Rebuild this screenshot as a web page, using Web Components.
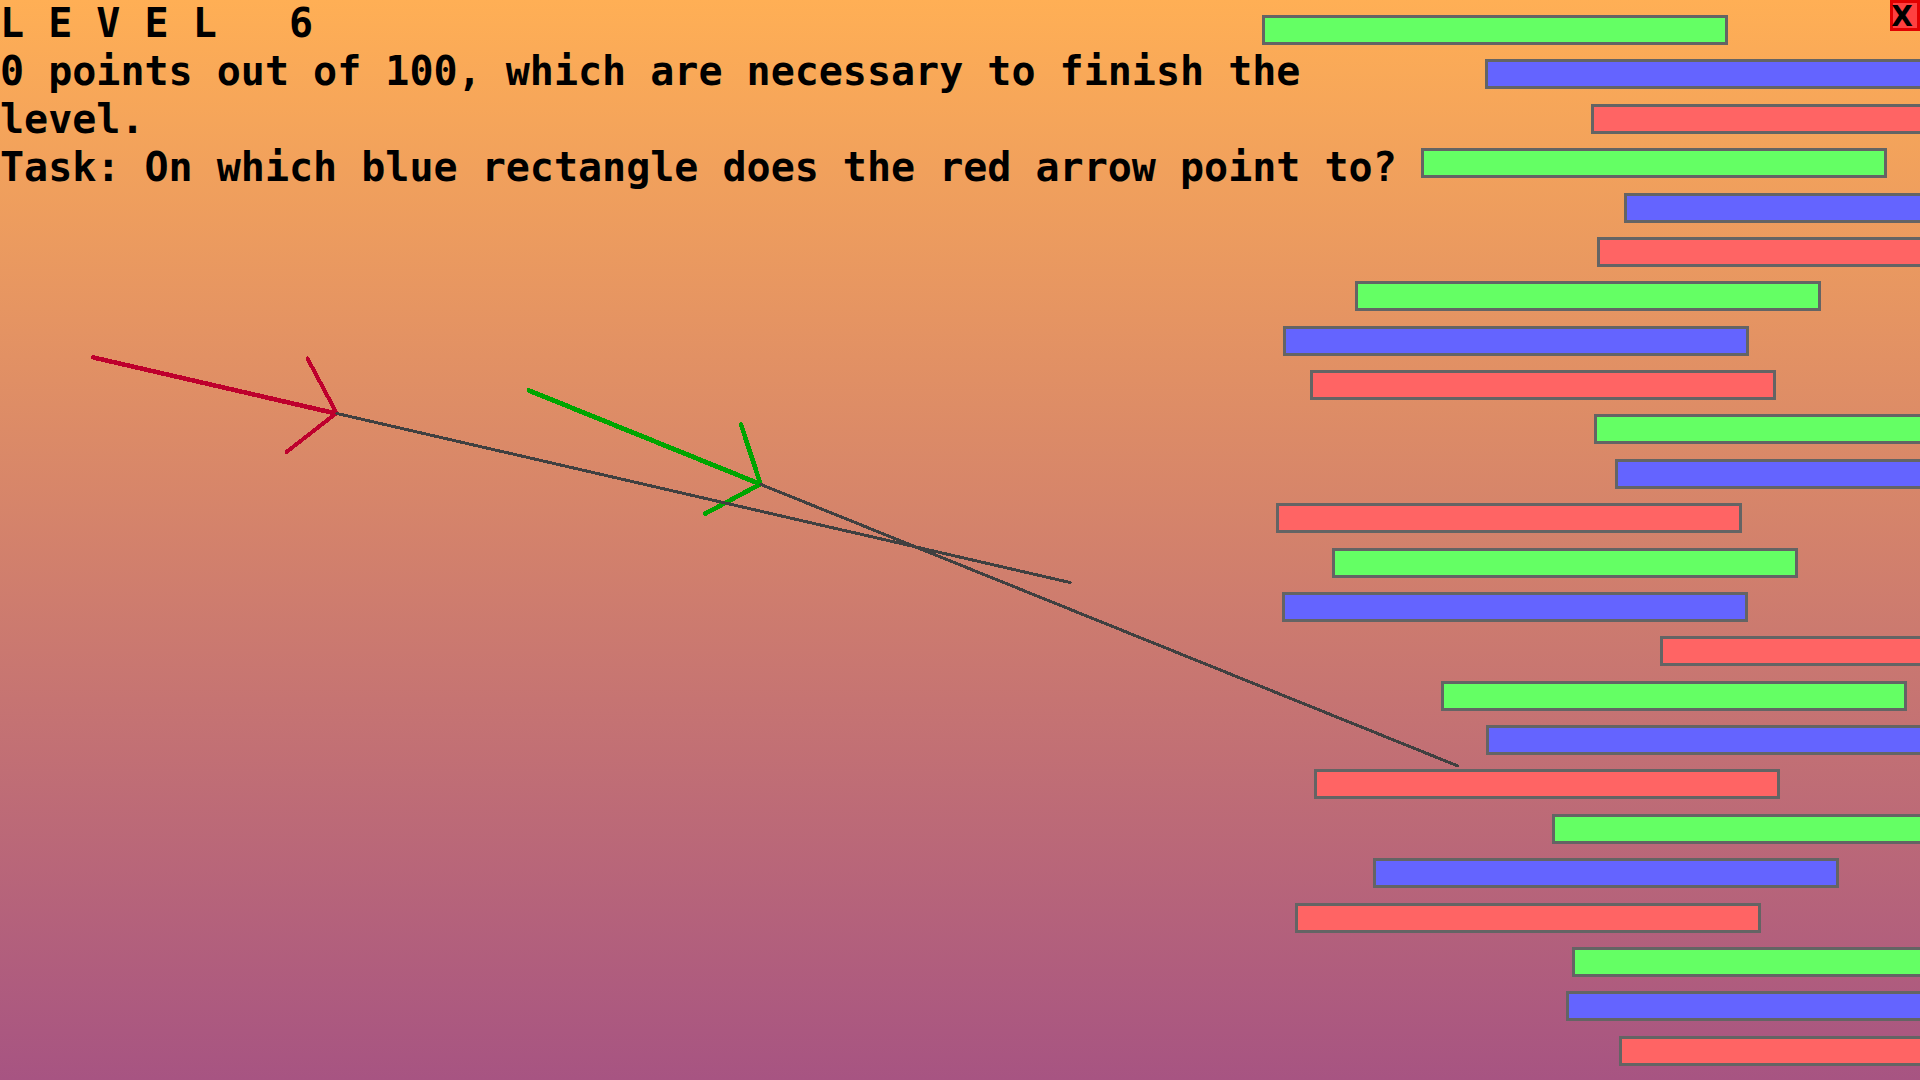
<!DOCTYPE html>
<html lang="en">
<head>
<meta charset="utf-8">
<title>Level 6</title>
<style>
html, body { margin: 0; height: 100%; }
body { font-family: "DejaVu Sans Mono", "Liberation Mono", monospace; font-weight: bold; font-size: 40px; line-height: 48px; color: #000; overflow: hidden; }
</style>
</head>
<body>
<game-screen></game-screen>
<script>
class GameScreen extends HTMLElement {
  constructor() {
    super();
    this.attachShadow({ mode: "open" }).innerHTML = `
      <style>
        :host { display: grid; grid-template: minmax(0, 1fr) / minmax(0, 1fr); height: 100vh; overflow: hidden;
                background: linear-gradient(#ffaf55, #a75482); }
        level-intro, target-field, arrow-layer { grid-area: 1 / 1; }
        level-intro { justify-self: start; align-self: start; max-width: 75%; }
        close-button { grid-area: 1 / 1; justify-self: end; align-self: start; }
      </style>
      <target-field></target-field>
      <arrow-layer></arrow-layer>
      <level-intro>
        <span slot="level">L E V E L &nbsp; 6</span>
        <span slot="score">0 points out of 100, which are necessary to finish the level.</span>
        <span slot="task">Task: On which blue rectangle does the red arrow point to?</span>
      </level-intro>
      <close-button></close-button>`;
  }
}

class LevelIntro extends HTMLElement {
  constructor() {
    super();
    this.attachShadow({ mode: "open" }).innerHTML = `
      <style>
        :host { display: block; margin-top: -1px; }
        h1, p { margin: 0; font: inherit; }
      </style>
      <h1><slot name="level"></slot></h1>
      <p><slot name="score"></slot></p>
      <p><slot name="task"></slot></p>`;
  }
}

class CloseButton extends HTMLElement {
  constructor() {
    super();
    this.attachShadow({ mode: "open" }).innerHTML = `
      <style>
        :host { display: block; }
        button { display: flex; width: 30px; height: 31px; margin: 0; padding: 2px 6px 0 0; border: 0;
                 box-sizing: border-box; align-items: center; justify-content: center;
                 background: #ff4040; box-shadow: inset 0 0 0 3px #e10000; color: #000;
                 font: bold 28px/28px "DejaVu Sans", sans-serif; cursor: pointer; }
      </style>
      <button type="button">X</button>`;
  }
}

/* One answer: a bar placed by its start on a 1920-unit wide field. */
class TargetBar extends HTMLElement {
  constructor() {
    super();
    this.attachShadow({ mode: "open" }).innerHTML = `
      <style>
        :host { display: block; }
        button { display: block; width: calc(466 / 1920 * 100%); height: 30px; padding: 0;
                 margin: 0 0 0 calc(var(--start) / 1920 * 100%); box-sizing: border-box;
                 border: 3px solid #646464; border-radius: 0; background: var(--fill); cursor: pointer; }
      </style>
      <button type="button"></button>`;
  }
  connectedCallback() {
    const fills = { green: "#64ff64", blue: "#6464ff", red: "#ff6464" };
    const color = this.getAttribute("color");
    this.style.setProperty("--fill", fills[color]);
    this.style.setProperty("--start", this.getAttribute("start"));
    this.shadowRoot.querySelector("button").setAttribute("aria-label", color + " rectangle");
  }
}

class TargetField extends HTMLElement {
  constructor() {
    super();
    const starts = [1262, 1485, 1591, 1421, 1624, 1597, 1355, 1283, 1310, 1594, 1615, 1276,
                    1332, 1282, 1660, 1441, 1486, 1314, 1552, 1373, 1295, 1572, 1566, 1619];
    const colors = ["green", "blue", "red"];
    this.attachShadow({ mode: "open" }).innerHTML = `
      <style>
        :host { display: grid; grid-auto-rows: minmax(0, 1fr); padding-top: 15px; overflow: hidden; }
      </style>` +
      starts.map((s, i) => `<target-bar color="${colors[i % 3]}" start="${s}"></target-bar>`).join("");
  }
}

class ArrowLayer extends HTMLElement {
  constructor() {
    super();
    this.attachShadow({ mode: "open" }).innerHTML = `
      <style>
        :host { display: block; pointer-events: none; }
        svg { display: block; width: 100%; height: 100%; }
        path { fill: none; stroke-linecap: round; shape-rendering: crispEdges; }
      </style>
      <svg viewBox="0 0 1920 1080" preserveAspectRatio="none" aria-hidden="true">
        <path stroke="#be002d" stroke-width="4.6" d="M93.5 357.5 336 413.5"/>
        <path stroke="#be002d" stroke-width="4" d="M307.5 358.5 336.5 413 286.5 452"/>
        <path stroke="#00a500" stroke-width="4.8" d="M529 390.5 760 484"/>
        <path stroke="#00a500" stroke-width="4.6" d="M741 424.5 760.5 484 705.5 513.5"/>
        <path stroke="#404040" stroke-width="3" d="M337 413.5 1070 582.5M761 484.5 1458 766"/>
      </svg>`;
  }
}

customElements.define("target-bar", TargetBar);
customElements.define("target-field", TargetField);
customElements.define("arrow-layer", ArrowLayer);
customElements.define("level-intro", LevelIntro);
customElements.define("close-button", CloseButton);
customElements.define("game-screen", GameScreen);
</script>
</body>
</html>
